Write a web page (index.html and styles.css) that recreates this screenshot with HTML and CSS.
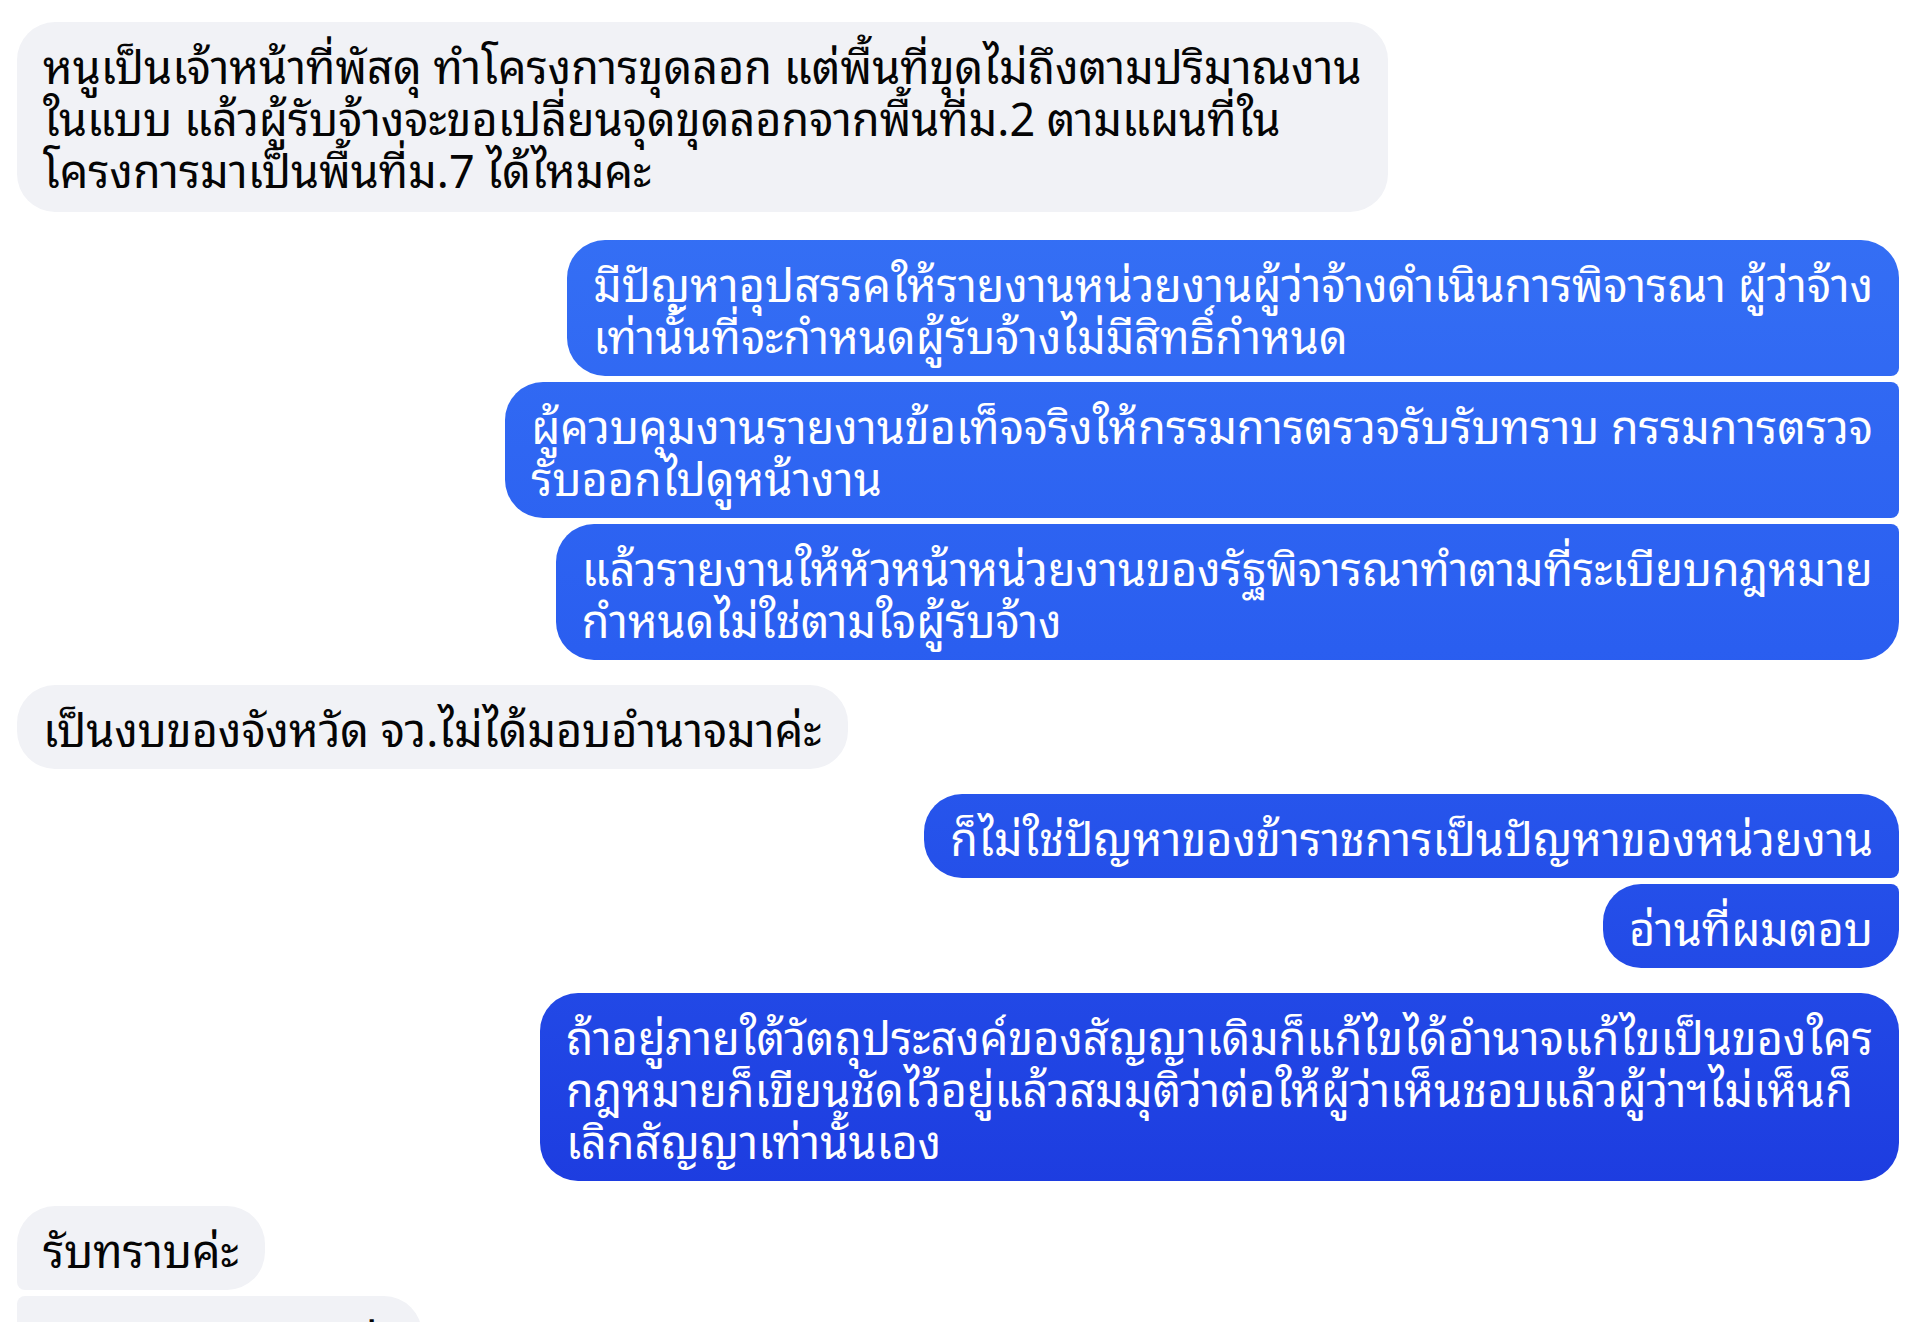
FILE: index.html
```html
<!DOCTYPE html>
<html lang="th">
<head>
    <meta charset="UTF-8">
    <title>แชท</title>
    <link rel="stylesheet" href="styles.css">
</head>
<body>
<div id="chat">
    <div class="row in first">
        <div class="bubble grey">หนูเป็นเจ้าหน้าที่พัสดุ ทำโครงการขุดลอก แต่พื้นที่ขุดไม่ถึงตามปริมาณงาน<br>ในแบบ แล้วผู้รับจ้างจะขอเปลี่ยนจุดขุดลอกจากพื้นที่ม.2 ตามแผนที่ใน<br>โครงการมาเป็นพื้นที่ม.7 ได้ไหมคะ</div>
    </div>

    <div class="row out group-gap">
        <div class="bubble blue top">มีปัญหาอุปสรรคให้รายงานหน่วยงานผู้ว่าจ้างดำเนินการพิจารณา ผู้ว่าจ้าง<br>เท่านั้นที่จะกำหนดผู้รับจ้างไม่มีสิทธิ์กำหนด</div>
    </div>
    <div class="row out">
        <div class="bubble blue mid">ผู้ควบคุมงานรายงานข้อเท็จจริงให้กรรมการตรวจรับรับทราบ กรรมการตรวจ<br>รับออกไปดูหน้างาน</div>
    </div>
    <div class="row out">
        <div class="bubble blue bottom">แล้วรายงานให้หัวหน้าหน่วยงานของรัฐพิจารณาทำตามที่ระเบียบกฎหมาย<br>กำหนดไม่ใช่ตามใจผู้รับจ้าง</div>
    </div>

    <div class="row in group-gap">
        <div class="bubble grey">เป็นงบของจังหวัด จว.ไม่ได้มอบอำนาจมาค่ะ</div>
    </div>

    <div class="row out group-gap">
        <div class="bubble blue top">ก็ไม่ใช่ปัญหาของข้าราชการเป็นปัญหาของหน่วยงาน</div>
    </div>
    <div class="row out">
        <div class="bubble blue bottom">อ่านที่ผมตอบ</div>
    </div>

    <div class="row out group-gap">
        <div class="bubble blue">ถ้าอยู่ภายใต้วัตถุประสงค์ของสัญญาเดิมก็แก้ไขได้อำนาจแก้ไขเป็นของใคร<br>กฎหมายก็เขียนชัดไว้อยู่แล้วสมมุติว่าต่อให้ผู้ว่าเห็นชอบแล้วผู้ว่าฯไม่เห็นก็<br>เลิกสัญญาเท่านั้นเอง</div>
    </div>

    <div class="row in group-gap">
        <div class="bubble grey top">รับทราบค่ะ</div>
    </div>
    <div class="row in">
        <div class="bubble grey bottom">ขอบพระคุณมาก ค่ะ</div>
    </div>
</div>
</body>
</html>
```
FILE: styles.css
```css
*{
    margin:0;
    padding:0;
    box-sizing:border-box;
}
body{
    background:#fff;
    font-family:"Noto Sans Thai Looped","Noto Sans",sans-serif;
    font-size:45px;
    line-height:52px;
}
#chat{
    display:flex;
    flex-direction:column;
    gap:6px;
    padding:22px 16px 40px 17px;
}
.row{
    display:flex;
}
.row.in{
    justify-content:flex-start;
}
.row.out{
    justify-content:flex-end;
}
.row.group-gap{
    margin-top:19px;
}
.row.first + .row.group-gap{
    margin-top:22px;
}
.row.first .bubble{
    padding-bottom:18px;
}
.bubble{
    white-space:nowrap;
    padding:16px 26px;
    border-radius:38px;
}
.grey{
    background:#f1f2f6;
    color:#050505;
}
.blue{
    color:#fff;
    background:linear-gradient(to bottom,#3a78f7 0,#2a5ef0 650px,#1a34dc 1322px);
    background-attachment:fixed;
}
/* grouped bubbles: the corner that faces the next bubble gets small */
.out .top{
    border-bottom-right-radius:8px;
}
.out .mid{
    border-top-right-radius:8px;
    border-bottom-right-radius:8px;
}
.out .bottom{
    border-top-right-radius:8px;
}
.in .top{
    border-bottom-left-radius:8px;
}
.in .bottom{
    border-top-left-radius:8px;
}
```
